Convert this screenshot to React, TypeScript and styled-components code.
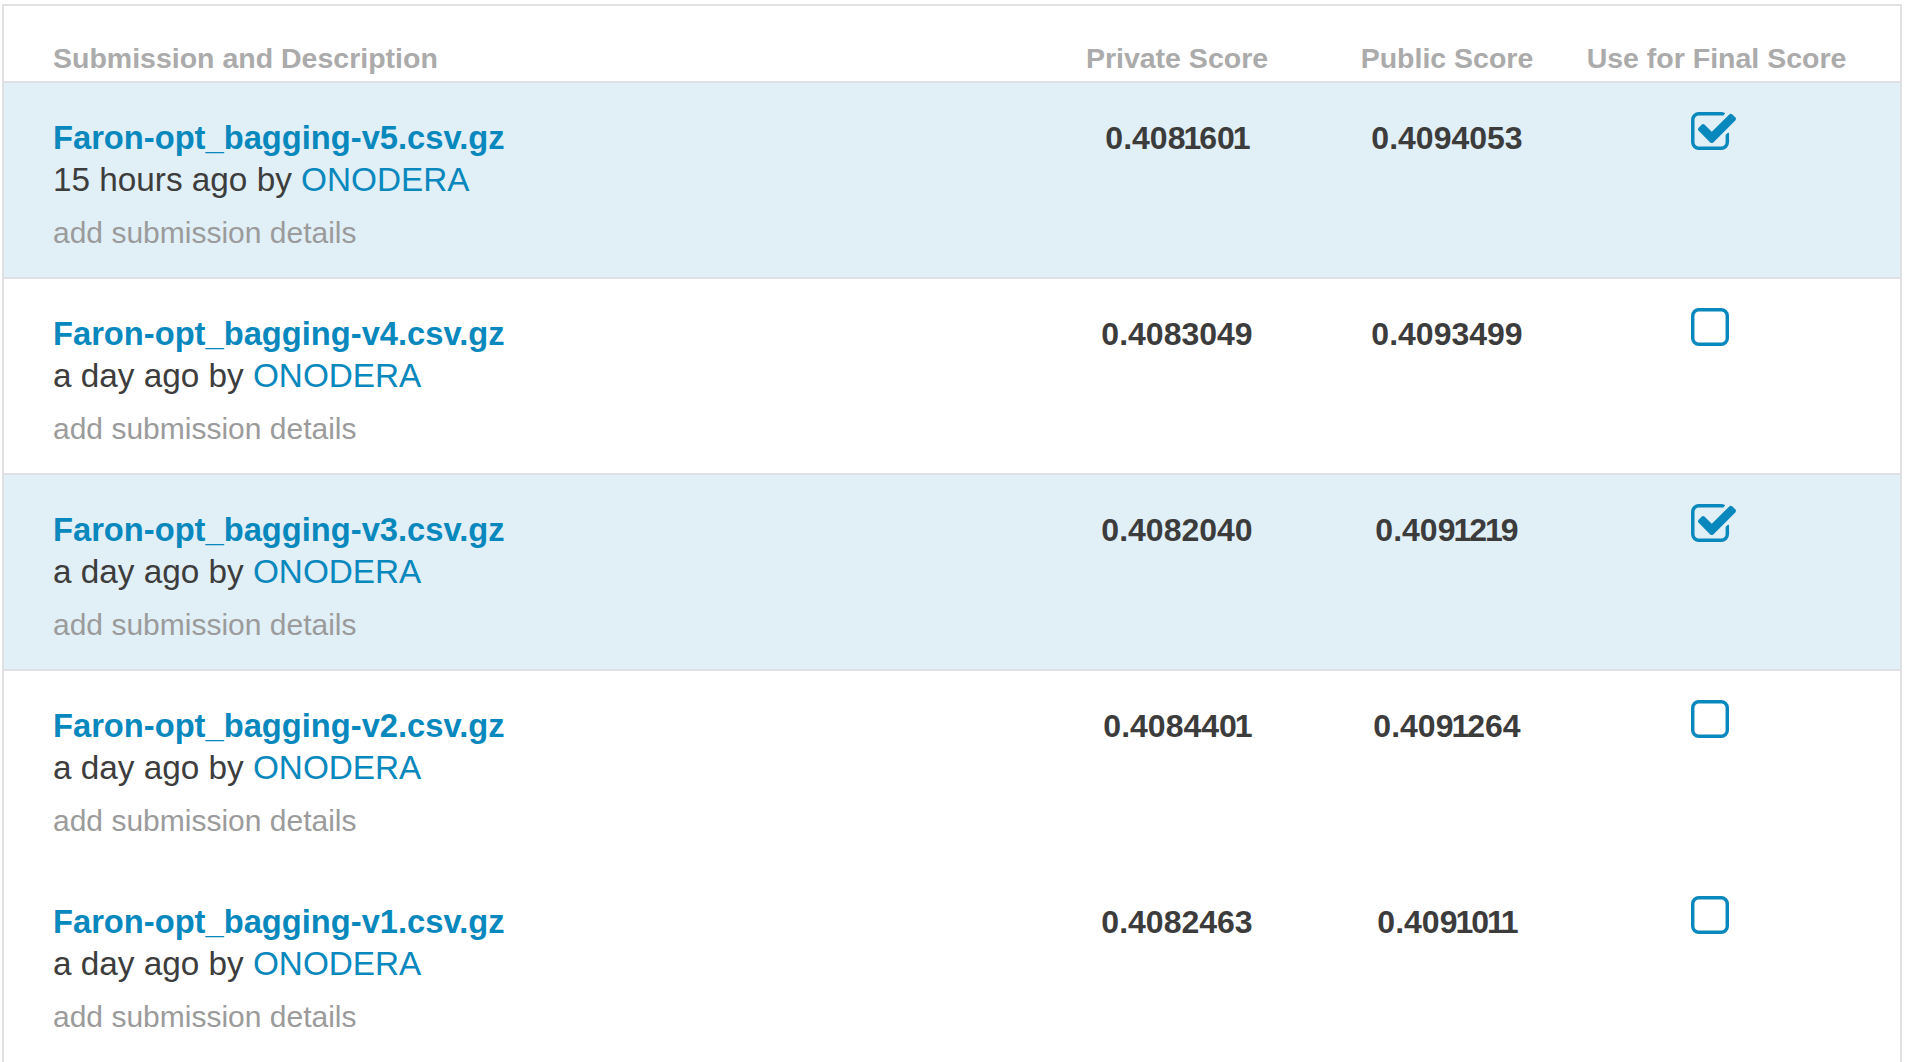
import * as React from 'react';
import styled, { createGlobalStyle } from 'styled-components';

interface Submission {
  file: string;
  when: string;
  author: string;
  privateScore: string;
  publicScore: string;
  selected: boolean;
}

const submissions: Submission[] = [
  { file: 'Faron-opt_bagging-v5.csv.gz', when: '15 hours ago', author: 'ONODERA', privateScore: '0.4081601', publicScore: '0.4094053', selected: true },
  { file: 'Faron-opt_bagging-v4.csv.gz', when: 'a day ago', author: 'ONODERA', privateScore: '0.4083049', publicScore: '0.4093499', selected: false },
  { file: 'Faron-opt_bagging-v3.csv.gz', when: 'a day ago', author: 'ONODERA', privateScore: '0.4082040', publicScore: '0.4091219', selected: true },
  { file: 'Faron-opt_bagging-v2.csv.gz', when: 'a day ago', author: 'ONODERA', privateScore: '0.4084401', publicScore: '0.4091264', selected: false },
  { file: 'Faron-opt_bagging-v1.csv.gz', when: 'a day ago', author: 'ONODERA', privateScore: '0.4082463', publicScore: '0.4091011', selected: false },
];

const blue = '#0888bd';
const line = '#dfe1e3';
const columns = '1058px 230px 310px 229px 1fr';

const GlobalStyle = createGlobalStyle`
  html, body {
    margin: 0;
    padding: 0;
    background: #ffffff;
    overflow: hidden;
  }
  body {
    font-family: "Liberation Sans", Arial, sans-serif;
  }
`;

const Table = styled.div`
  box-sizing: border-box;
  width: 1900px;
  margin: 4px 0 0 2px;
  border: 2px solid ${line};
  border-bottom: none;
  background: #ffffff;
`;

const HeaderRow = styled.div`
  display: grid;
  grid-template-columns: ${columns};
  align-items: baseline;
  padding: 36px 0 6px;
  border-bottom: 2px solid ${line};
  font-size: 28.5px;
  line-height: 33px;
  font-weight: 700;
  color: #ababab;
  white-space: nowrap;
`;

const HeaderCell = styled.div<{ $left?: boolean }>`
  display: flex;
  justify-content: ${p => (p.$left ? 'flex-start' : 'center')};
  padding-left: ${p => (p.$left ? '49px' : '0')};
`;

const Row = styled.div<{ $selected: boolean; $divider: boolean }>`
  display: grid;
  grid-template-columns: ${columns};
  align-items: baseline;
  padding: 37px 0 26px;
  background: ${p => (p.$selected ? '#e1eff7' : '#ffffff')};
  border-bottom: 2px solid ${p => (p.$divider ? line : 'transparent')};
`;

const Description = styled.div`
  padding-left: 49px;
  white-space: nowrap;
`;

const FileName = styled.a`
  display: block;
  font-size: 32.7px;
  line-height: 36px;
  font-weight: 700;
  color: ${blue};
  text-decoration: none;
`;

const Meta = styled.div`
  font-size: 33.3px;
  line-height: 48px;
  color: #3d3d3d;
`;

const Author = styled.a`
  color: ${blue};
  text-decoration: none;
`;

const Details = styled.div`
  margin-top: 11px;
  font-size: 30px;
  line-height: 36px;
  color: #9b9b9b;
`;

const ScoreText = styled.div`
  text-align: center;
  font-size: 32px;
  line-height: 36px;
  font-weight: 700;
  color: #3c3c3c;
  white-space: nowrap;
`;

// the reference face sets "1" narrower than the other figures
const One = styled.span`
  margin: 0 -2px;
`;

const Score: React.FunctionComponent<{ value: string }> = ({ value }) => (
  <ScoreText>
    {value.split('').map((c, i) => (c === '1' ? <One key={i}>1</One> : c))}
  </ScoreText>
);

const Pick = styled.div`
  align-self: start;
  margin-top: -8px;
  padding-left: 89px;
  line-height: 0;

  svg {
    display: block;
  }
`;

const CheckedBox = () => (
  <svg width="45" height="38" viewBox="64 128 1663 1408" fill={blue}>
    <path d="M1472 930v318q0 119-84.5 203.5t-203.5 84.5h-832q-119 0-203.5-84.5t-84.5-203.5v-832q0-119 84.5-203.5t203.5-84.5h832q63 0 117 25 15 7 18 23 3 17-9 29l-49 49q-10 10-23 10-3 0-9-2-23-6-45-6h-832q-66 0-113 47t-47 113v832q0 66 47 113t113 47h832q66 0 113-47t47-113v-254q0-13 9-22l64-64q10-10 23-10 6 0 12 3 20 8 20 29zm231-489l-814 814q-24 24-57 24t-57-24l-430-430q-24-24-24-57t24-57l110-110q24-24 57-24t57 24l263 263 647-647q24-24 57-24t57 24l110 110q24 24 24 57t-24 57z" />
  </svg>
);

const EmptyBox = () => (
  <svg width="38" height="38" viewBox="0 128 1408 1408" fill={blue}>
    <path d="M1120 256h-832q-66 0-113 47t-47 113v832q0 66 47 113t113 47h832q66 0 113-47t47-113v-832q0-66-47-113t-113-47zm288 160v832q0 119-84.5 203.5t-203.5 84.5h-832q-119 0-203.5-84.5t-84.5-203.5v-832q0-119 84.5-203.5t203.5-84.5h832q119 0 203.5 84.5t84.5 203.5z" />
  </svg>
);

const App: React.FunctionComponent = () => (
  <>
    <GlobalStyle />
    <Table>
      <HeaderRow>
        <HeaderCell $left>Submission and Description</HeaderCell>
        <HeaderCell>Private Score</HeaderCell>
        <HeaderCell>Public Score</HeaderCell>
        <HeaderCell>Use for Final Score</HeaderCell>
        <div />
      </HeaderRow>
      {submissions.map((s, i) => {
        const next = submissions[i + 1];
        const divider = s.selected || (next !== undefined && next.selected);
        return (
          <Row key={s.file} $selected={s.selected} $divider={divider}>
            <Description>
              <FileName href="#">{s.file}</FileName>
              <Meta>
                {s.when} by <Author href="#">{s.author}</Author>
              </Meta>
              <Details>add submission details</Details>
            </Description>
            <Score value={s.privateScore} />
            <Score value={s.publicScore} />
            <Pick>{s.selected ? <CheckedBox /> : <EmptyBox />}</Pick>
            <div />
          </Row>
        );
      })}
    </Table>
  </>
);

export default App;
